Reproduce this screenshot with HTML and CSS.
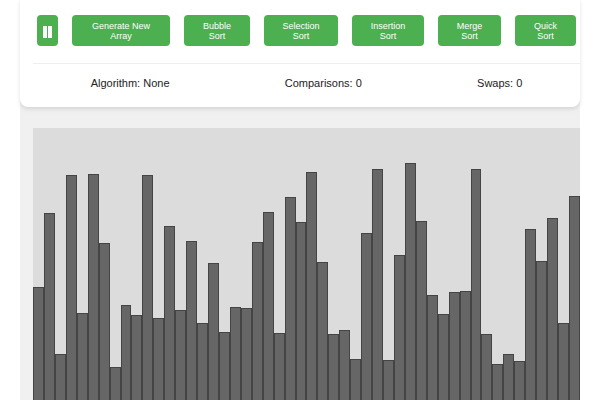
FILE: index.html
```html
<!DOCTYPE html>
<html lang="en">
<head>
    <meta charset="UTF-8">
    <meta name="viewport" content="width=device-width, initial-scale=1.0">
    <title>Sorting Visualizer</title>
    <link rel="stylesheet" href="styles.css">
</head>
<body>
    <div class="app">
        <!-- Controls -->
        <div class="panel">
            <div class="controls">
                <button class="btn btn-pause" aria-label="Pause"><span></span><span></span></button>
                <button class="btn w-gen">Generate New<br>Array</button>
                <button class="btn w-bubble">Bubble<br>Sort</button>
                <button class="btn w-sel">Selection<br>Sort</button>
                <button class="btn w-ins">Insertion<br>Sort</button>
                <button class="btn w-merge">Merge<br>Sort</button>
                <button class="btn w-quick">Quick<br>Sort</button>
            </div>
            <div class="stats">
                <span>Algorithm: None</span>
                <span>Comparisons: 0</span>
                <span>Swaps: 0</span>
            </div>
        </div>

        <!-- Bars -->
        <div class="bars">
            <div class="bar" style="height:113px"></div>
            <div class="bar" style="height:187px"></div>
            <div class="bar" style="height:46px"></div>
            <div class="bar" style="height:225px"></div>
            <div class="bar" style="height:87px"></div>
            <div class="bar" style="height:226px"></div>
            <div class="bar" style="height:157px"></div>
            <div class="bar" style="height:33px"></div>
            <div class="bar" style="height:95px"></div>
            <div class="bar" style="height:85px"></div>
            <div class="bar" style="height:225px"></div>
            <div class="bar" style="height:82px"></div>
            <div class="bar" style="height:174px"></div>
            <div class="bar" style="height:90px"></div>
            <div class="bar" style="height:159px"></div>
            <div class="bar" style="height:77px"></div>
            <div class="bar" style="height:137px"></div>
            <div class="bar" style="height:68px"></div>
            <div class="bar" style="height:93px"></div>
            <div class="bar" style="height:92px"></div>
            <div class="bar" style="height:158px"></div>
            <div class="bar" style="height:188px"></div>
            <div class="bar" style="height:67px"></div>
            <div class="bar" style="height:203px"></div>
            <div class="bar" style="height:178px"></div>
            <div class="bar" style="height:228px"></div>
            <div class="bar" style="height:138px"></div>
            <div class="bar" style="height:66px"></div>
            <div class="bar" style="height:70px"></div>
            <div class="bar" style="height:41px"></div>
            <div class="bar" style="height:167px"></div>
            <div class="bar" style="height:231px"></div>
            <div class="bar" style="height:40px"></div>
            <div class="bar" style="height:145px"></div>
            <div class="bar" style="height:237px"></div>
            <div class="bar" style="height:179px"></div>
            <div class="bar" style="height:105px"></div>
            <div class="bar" style="height:86px"></div>
            <div class="bar" style="height:108px"></div>
            <div class="bar" style="height:109px"></div>
            <div class="bar" style="height:231px"></div>
            <div class="bar" style="height:66px"></div>
            <div class="bar" style="height:36px"></div>
            <div class="bar" style="height:46px"></div>
            <div class="bar" style="height:39px"></div>
            <div class="bar" style="height:171px"></div>
            <div class="bar" style="height:139px"></div>
            <div class="bar" style="height:182px"></div>
            <div class="bar" style="height:77px"></div>
            <div class="bar" style="height:204px"></div>
        </div>
    </div>
</body>
</html>
```

FILE: styles.css
```css
body {
    margin: 0;
    font-family: 'Liberation Sans', Arial, sans-serif;
    background-color: #fff;
    color: #222;
    overflow: hidden;
}

.app {
    margin-left: 20px;
    width: 560px;
    height: 400px;
    background-color: #f0f0f0;
}

/* Top Panel */
.panel {
    background-color: #fff;
    border-radius: 0 0 8px 8px;
    box-shadow: 0 2px 4px rgba(0, 0, 0, 0.12);
    padding: 15px 0 17px 13px;
}

.controls {
    display: flex;
    gap: 14px;
    padding-left: 4px;
    padding-bottom: 17px;
    border-bottom: 1px solid #eee;
}

.btn {
    height: 31px;
    padding: 0;
    background-color: #4caf50;
    color: #fff;
    border: none;
    border-radius: 4px;
    font-family: 'Liberation Sans', Arial, sans-serif;
    font-size: 9px;
    line-height: 10px;
    text-align: center;
    cursor: pointer;
}

.btn-pause {
    width: 21px;
    display: flex;
    align-items: center;
    justify-content: center;
    gap: 1px;
    padding-top: 3px;
}

.btn-pause span {
    width: 4px;
    height: 12px;
    background-color: #fff;
}

.w-gen { width: 98px; }
.w-bubble { width: 66px; }
.w-sel { width: 74px; }
.w-ins { width: 72px; }
.w-merge { width: 63px; }
.w-quick { width: 61px; }

.stats {
    display: flex;
    justify-content: space-around;
    margin-top: 12px;
    font-size: 11px;
    line-height: 14px;
}

/* Bars */
.bars {
    margin: 21px 0 0 13px;
    height: 272px;
    background-color: #dcdcdc;
    display: flex;
    align-items: flex-end;
}

.bar {
    flex: 1;
    box-sizing: border-box;
    background-color: #666;
    border: 1px solid #444;
    border-bottom: none;
}
```
